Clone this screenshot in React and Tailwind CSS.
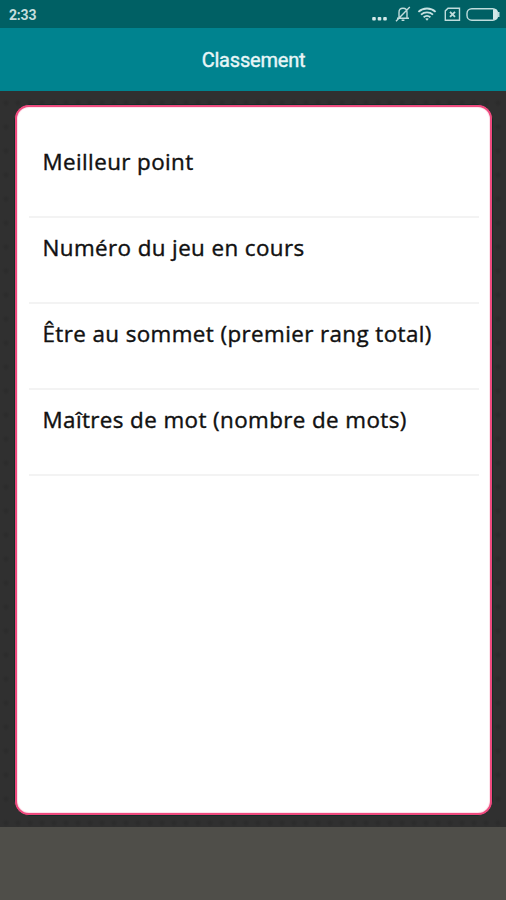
const rankings = [
  'Meilleur point',
  'Numéro du jeu en cours',
  'Être au sommet (premier rang total)',
  'Maîtres de mot (nombre de mots)',
]

function StatusIcons() {
  return (
    <svg width="130" height="20" viewBox="0 0 130 20" fill="none" stroke="#bfdcdc" strokeWidth="1.4">
      {/* more dots */}
      <g fill="#d3e8e8" stroke="none">
        <rect x="1.2" y="12" width="3.6" height="3.4" rx="1" />
        <rect x="6.7" y="12" width="3.6" height="3.4" rx="1" />
        <rect x="12.2" y="12" width="3.6" height="3.4" rx="1" />
      </g>
      {/* muted bell */}
      <path d="M26 13.3h12M28 13V7.2c0-2.5 1.6-4 4-4s4 1.5 4 4V13M30.6 15.2h2.8M25 16.2L38.8 2" />
      {/* wifi */}
      <g stroke="#c8e2e2" strokeWidth="1.8">
        <path d="M47.4 6.8c4.8-4.4 12.4-4.4 17.2 0" />
        <path d="M50 9.6c3.4-3 8.6-3 12 0" />
        <path d="M52.6 12.3c2-1.7 4.8-1.7 6.8 0" />
        <path d="M54.8 13.8h2.4L56 15.3z" fill="#c8e2e2" strokeWidth="0.8" />
      </g>
      {/* no sim */}
      <path d="M77 3.2h11.5v12H74.3V5.9z" />
      <path d="M79 6.9l5 5M84 6.9l-5 5" strokeWidth="1.9" />
      {/* battery */}
      <rect x="96" y="3.7" width="30.5" height="11.5" rx="4.8" />
      <path d="M122 4.2h2c1.7 0 2.5 1 2.5 2.5v5.5c0 1.5-.8 2.5-2.5 2.5h-2z" fill="#d3e8e8" stroke="none" />
      <path d="M126.5 7h2v5h-2z" fill="#bfdcdc" stroke="none" />
    </svg>
  )
}

function StatusBar() {
  return (
    <div className="flex h-7 items-center justify-between bg-[#006064] pl-[9px] pr-[5px] pt-0.5">
      <span className="text-[14px] font-bold leading-none tracking-[-0.2px] text-[#c4dddd]">2:33</span>
      <StatusIcons />
    </div>
  )
}

function RankingRow({ label }) {
  return (
    <li className="h-[86px] border-b-2 border-[#f3f3f3] pl-[13.5px] pt-[13.5px] font-['Open_Sans',sans-serif] text-[22.4px] leading-8 tracking-[0.4px] text-[#111]">
      <span className="whitespace-nowrap [-webkit-text-stroke:0.4px_#111]">{label}</span>
    </li>
  )
}

export default function App() {
  return (
    <div className="flex h-[900px] w-[506px] flex-col overflow-hidden bg-[#303030] font-[Roboto,sans-serif]">
      <StatusBar />
      <header className="flex h-[63px] items-center justify-center bg-[#00838f]">
        <h1 className="pl-px text-[20px] leading-7 tracking-[-0.2px] text-[#e8f6f7] [-webkit-text-stroke:0.4px_#e8f6f7]">
          Classement
        </h1>
      </header>
      <main className="flex-1 bg-[radial-gradient(circle,#2c2c2c_1px,#303030_4px)] bg-[length:12px_24px] pb-[11px] pl-3.5 pr-[13px] pt-[13px]">
        <div className="h-full rounded-[15px] border border-[#152d28] bg-[#e84a7c]">
          <div className="h-full rounded-[14px] border-2 border-[#ee4a7e] bg-white pl-3 pr-[11px] pt-[25px] shadow-[inset_0_0_0_1px_#fde3eb]">
            <ul>
              {rankings.map((label) => (
                <RankingRow key={label} label={label} />
              ))}
            </ul>
          </div>
        </div>
      </main>
      <footer className="h-[73px] bg-[#4f4e49]" />
    </div>
  )
}
